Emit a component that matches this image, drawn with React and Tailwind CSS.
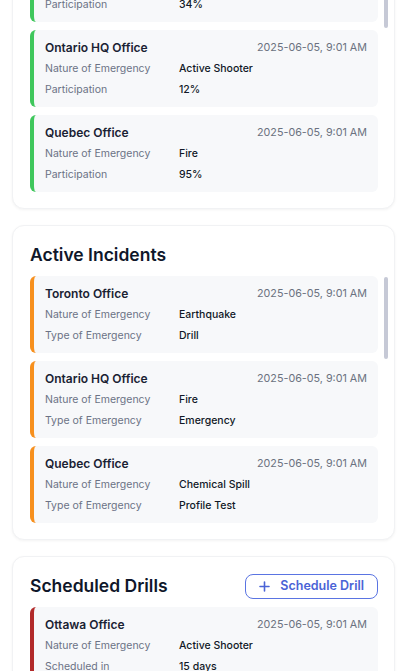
import React from "react";

const drills = [
  { office: "Toronto Office", nature: "Earthquake", value: "34%" },
  { office: "Ontario HQ Office", nature: "Active Shooter", value: "12%" },
  { office: "Quebec Office", nature: "Fire", value: "95%" },
  { office: "Ottawa Office", nature: "Flood", value: "61%" },
];

const incidents = [
  { office: "Toronto Office", nature: "Earthquake", value: "Drill" },
  { office: "Ontario HQ Office", nature: "Fire", value: "Emergency" },
  { office: "Quebec Office", nature: "Chemical Spill", value: "Profile Test" },
  { office: "Ottawa Office", nature: "Flood", value: "Drill" },
];

const scheduled = [
  { office: "Ottawa Office", nature: "Active Shooter", value: "15 days" },
  { office: "Toronto Office", nature: "Fire", value: "22 days" },
];

const DATE = "2025-06-05, 9:01 AM";

function Row({ label, value }) {
  return (
    <div className="flex h-[21px] items-center text-[10.5px]">
      <span className="w-[134px] text-[#6b7285]">{label}</span>
      <span className="font-medium text-[#111827]">{value}</span>
    </div>
  );
}

function Card({ item, bar, secondLabel }) {
  return (
    <div className={`rounded-md border-l-4 ${bar} bg-[#f7f8fa] pl-[11px] pr-[11px] pt-[10px] pb-[7px]`}>
      <div className="flex h-4 items-center justify-between">
        <span className="text-[12px] font-semibold text-[#1a2233]">{item.office}</span>
        <span className="text-[10.75px] text-[#6b7280]">{DATE}</span>
      </div>
      <div className="mt-[2px]">
        <Row label="Nature of Emergency" value={item.nature} />
        <Row label={secondLabel} value={item.value} />
      </div>
    </div>
  );
}

function Section({ title, items, bar, secondLabel, action, thumb }) {
  return (
    <div className="relative rounded-xl border border-[#f1f2f4] bg-white pl-[17px] pr-[16px] pt-[15px] pb-4 shadow-[0_1px_3px_rgba(0,0,0,0.05)]">
      <div className="flex h-7 items-center justify-between">
        <h2 className="text-[17.5px] font-semibold text-[#0f172a]">{title}</h2>
        {action}
      </div>
      <div className="relative mt-[7px] max-h-[247px] overflow-hidden">
        <div className="flex flex-col gap-2">
          {items.map((it, i) => (
            <Card key={i} item={it} bar={bar} secondLabel={secondLabel} />
          ))}
        </div>
      </div>
      {thumb && (
        <div className="absolute right-[6px] top-[51px] h-[82px] w-[4px] rounded-full bg-[#c6c9d6]" />
      )}
    </div>
  );
}

export default function App() {
  return (
    <div className="h-[671px] overflow-hidden bg-white font-['Inter',sans-serif]">
      <div className="-mt-[106px] flex flex-col gap-4 pl-[12px] pr-[15px]">
        <Section
          title="Recent Drills"
          items={drills}
          bar="border-[#3fc75c]"
          secondLabel="Participation"
          thumb
        />
        <Section
          title="Active Incidents"
          items={incidents}
          bar="border-[#f7901e]"
          secondLabel="Type of Emergency"
          thumb
        />
        <Section
          title="Scheduled Drills"
          items={scheduled}
          bar="border-[#b22a2a]"
          secondLabel="Scheduled in"
          action={
            <button className="flex h-[25px] items-center gap-[10px] rounded-lg border-[1.5px] border-[#5a74e2] px-[13px] text-[12.5px] font-semibold text-[#4a63d6]">
              <svg width="11" height="11" viewBox="0 0 11 11" fill="none" stroke="currentColor" strokeWidth="1.6" strokeLinecap="round">
                <path d="M5.5 1v9M1 5.5h9" />
              </svg>
              Schedule Drill
            </button>
          }
        />
      </div>
    </div>
  );
}
